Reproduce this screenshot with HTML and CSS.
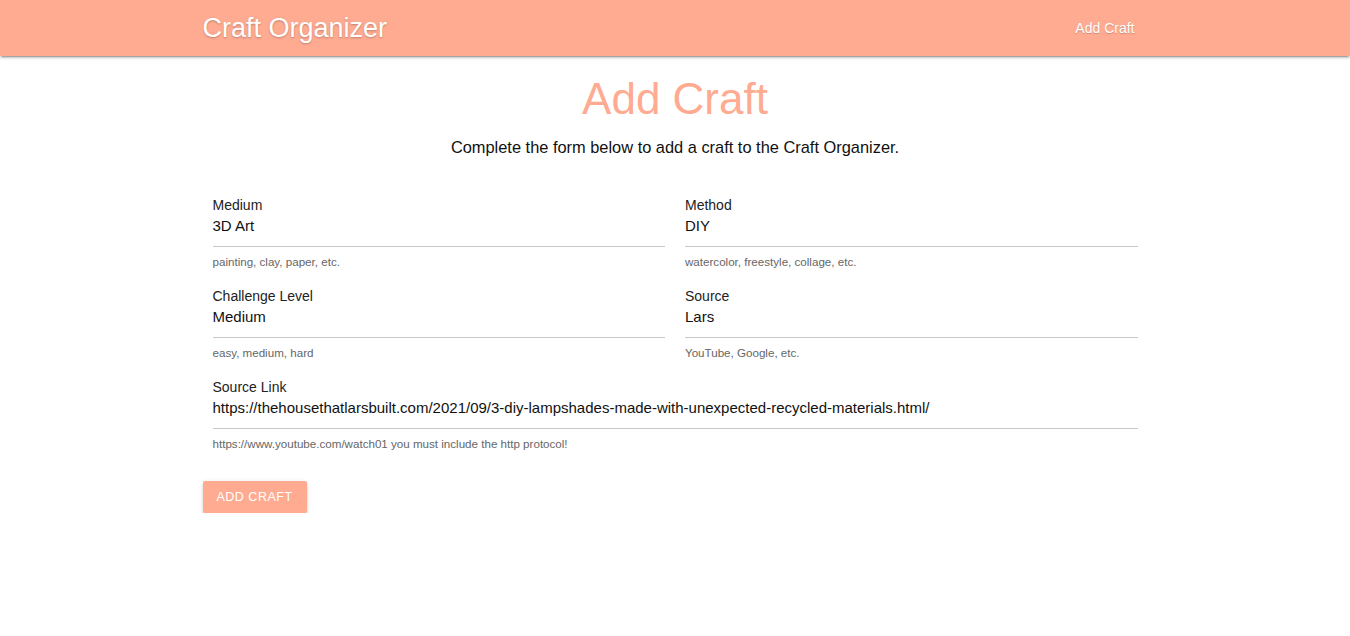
FILE: index.html
```html
<!DOCTYPE html>
<html>
<head>
<meta charset="utf-8">
<link rel="stylesheet" href="styles.css">
</head>
<body>
<nav class="nav">
  <div class="nav-inner">
    <a class="brand">Craft Organizer</a>
    <a class="nav-link">Add Craft</a>
  </div>
</nav>
<main class="container">
  <h1 class="title">Add Craft</h1>
  <p class="subtitle">Complete the form below to add a craft to the Craft Organizer.</p>
  <form class="form">
    <div class="row">
      <div class="field">
        <label class="label">Medium</label>
        <div class="value">3D Art</div>
        <div class="helper">painting, clay, paper, etc.</div>
      </div>
      <div class="field">
        <label class="label">Method</label>
        <div class="value">DIY</div>
        <div class="helper">watercolor, freestyle, collage, etc.</div>
      </div>
    </div>
    <div class="row">
      <div class="field">
        <label class="label">Challenge Level</label>
        <div class="value">Medium</div>
        <div class="helper">easy, medium, hard</div>
      </div>
      <div class="field">
        <label class="label">Source</label>
        <div class="value">Lars</div>
        <div class="helper">YouTube, Google, etc.</div>
      </div>
    </div>
    <div class="row">
      <div class="field">
        <label class="label">Source Link</label>
        <div class="value">https://thehousethatlarsbuilt.com/2021/09/3-diy-lampshades-made-with-unexpected-recycled-materials.html/</div>
        <div class="helper">https://www.youtube.com/watch01 you must include the http protocol!</div>
      </div>
    </div>
    <button type="button" class="btn">Add Craft</button>
  </form>
</main>
</body>
</html>
```

FILE: styles.css
```css
html, body {
  margin: 0;
  padding: 0;
  background: #fff;
  font-family: "Helvetica Neue", "Liberation Sans", Arial, sans-serif;
  color: #222;
}
.nav {
  height: 56px;
  background: #ffab91;
  box-shadow: 0 2px 2px 0 rgba(0,0,0,0.14), 0 1px 5px 0 rgba(0,0,0,0.12), 0 3px 1px -2px rgba(0,0,0,0.2);
}
.nav-inner {
  width: 70%;
  margin: 0 auto;
  height: 56px;
  display: flex;
  align-items: center;
  justify-content: space-between;
}
.brand {
  color: #fff;
  font-size: 27px;
  text-shadow: 0 1px 2px rgba(0,0,0,0.25);
  line-height: 56px;
}
.nav-link {
  color: #fff;
  font-size: 14px;
  padding: 0 13px;
  line-height: 56px;
  text-shadow: 0 1px 1px rgba(0,0,0,0.2);
}
.container {
  width: 70%;
  margin: 0 auto;
}
.title {
  margin: 16px 0 0;
  text-align: center;
  color: #ffab91;
  font-weight: 400;
  font-size: 44px;
  line-height: 54px;
}
.subtitle {
  margin: 10px 0 0;
  text-align: center;
  font-size: 16.4px;
  line-height: 22px;
  color: #111;
}
.form {
  margin-top: 37px;
  display: flex;
  flex-direction: column;
}
.row {
  display: flex;
  height: 91px;
}
.field {
  flex: 1;
  padding: 0 10px;
  display: flex;
  flex-direction: column;
}
.label {
  font-size: 14px;
  line-height: 20px;
  color: #222;
}
.value {
  font-size: 15px;
  line-height: 22px;
  padding-bottom: 9px;
  border-bottom: 1px solid #c9c9c9;
  color: #111;
  white-space: nowrap;
}
.helper {
  margin-top: 8px;
  font-size: 11.6px;
  line-height: 14px;
  color: #666;
}
.btn {
  margin-top: 13px;
  align-self: flex-start;
  height: 32px;
  padding: 0 14px;
  border: none;
  border-radius: 2px;
  background: #ffab91;
  color: #fff;
  font-family: inherit;
  font-size: 12.5px;
  letter-spacing: 0.5px;
  text-transform: uppercase;
  box-shadow: 0 2px 2px 0 rgba(0,0,0,0.14), 0 1px 5px 0 rgba(0,0,0,0.12), 0 3px 1px -2px rgba(0,0,0,0.2);
}
```
